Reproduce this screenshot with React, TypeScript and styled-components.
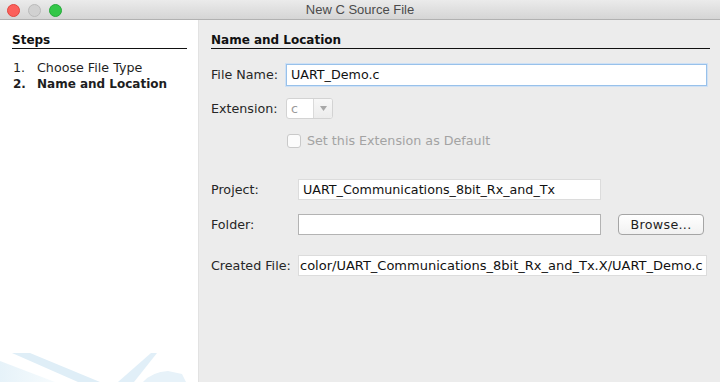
import React from 'react'
import styled, { createGlobalStyle } from 'styled-components'

const GlobalStyle = createGlobalStyle`
  html, body {
    margin: 0;
    padding: 0;
    background: #ececec;
  }
  #root {
    width: 720px;
    height: 382px;
    overflow: hidden;
  }
`

const uiFont = `"DejaVu Sans", "Noto Sans", sans-serif`

const Window = styled.div`
  width: 720px;
  height: 382px;
  display: flex;
  flex-direction: column;
  font-family: ${uiFont};
  font-size: 12.7px;
  color: #222;
`

const TitleBar = styled.div`
  height: 19px;
  flex: none;
  display: flex;
  align-items: center;
  position: relative;
  background: linear-gradient(#ebebeb, #d5d5d5);
  border-bottom: 1px solid #b1b1b1;
`

const Lights = styled.div`
  display: flex;
  gap: 8px;
  padding-left: 7px;
  padding-top: 2px;
`

const Light = styled.span<{ $fill: string; $edge: string }>`
  display: block;
  width: 11px;
  height: 11px;
  border-radius: 50%;
  background: ${p => p.$fill};
  border: 1px solid ${p => p.$edge};
  box-sizing: content-box;
`

const Title = styled.div`
  position: absolute;
  left: 0;
  right: 0;
  top: 0;
  line-height: 20px;
  text-align: center;
  font-family: "Liberation Sans", Arial, sans-serif;
  font-size: 13px;
  color: #4b4b4b;
`

const Body = styled.div`
  flex: 1;
  display: flex;
  min-height: 0;
`

const Sidebar = styled.div`
  width: 175px;
  flex: none;
  background: #fff;
  padding: 13px 11px 0 12px;
  display: flex;
  flex-direction: column;
  border-right: 1px solid #e2e2e2;
  position: relative;
`

const SectionTitle = styled.div`
  font-weight: bold;
  font-size: 12px;
  line-height: 15px;
  padding-bottom: 0;
  border-bottom: 1px solid #111;
  color: #111;
`

const StepList = styled.ol`
  list-style: none;
  margin: 11px 0 0 1px;
  padding: 0;
`

const Step = styled.li<{ $current?: boolean }>`
  display: flex;
  line-height: 16px;
  font-weight: ${p => (p.$current ? 'bold' : 'normal')};
  font-size: ${p => (p.$current ? '12px' : '12.7px')};
  color: #1e1e1e;
`

const StepNum = styled.span`
  width: 24px;
  flex: none;
`

const Watermark = styled.svg`
  position: absolute;
  left: 0;
  bottom: 0;
`

const Content = styled.div`
  flex: 1;
  background: #ececec;
  padding: 13px 10px 0 12px;
  display: flex;
  flex-direction: column;
`

const FormTop = styled.div`
  display: grid;
  grid-template-columns: 75px 1fr;
  align-items: center;
  row-gap: 12px;
  margin-top: 15px;
  padding-right: 3px;
`

const FormBottom = styled.div<{ $gap: number }>`
  display: grid;
  grid-template-columns: 87px 303px 1fr;
  align-items: center;
  margin-top: ${p => p.$gap}px;
  padding-right: 3px;
  row-gap: 14px;
`

const Label = styled.div`
  color: #262626;
  line-height: 16px;
  white-space: nowrap;
`

const TextField = styled.div<{ $tone: 'focus' | 'plain' | 'readonly'; $span?: boolean }>`
  height: ${p => (p.$tone === 'focus' ? 20 : 19)}px;
  box-sizing: content-box;
  background: #fff;
  border: 1px solid
    ${p => (p.$tone === 'focus' ? '#98c1ea' : p.$tone === 'plain' ? '#b3b3b3' : '#dcdcdc')};
  box-shadow: ${p => (p.$tone === 'focus' ? '0 0 0 1px #cfe1f5' : 'none')};
  padding: 0 4px;
  line-height: ${p => (p.$tone === 'focus' ? 20 : 19)}px;
  color: #111;
  white-space: nowrap;
  overflow: hidden;
  ${p => (p.$span ? 'grid-column: 2 / 4;' : '')}
`

const CreatedText = styled.span`
  display: inline-block;
  margin-left: -3px;
  font-size: 13px;
`

const Combo = styled.div`
  display: flex;
  width: 45px;
  height: 19px;
  border: 1px solid #d3d3d3;
  border-radius: 3px;
  background: #fff;
  overflow: hidden;
`

const ComboValue = styled.div`
  flex: 1;
  padding-left: 4px;
  line-height: 19px;
  color: #9a9a9a;
`

const ComboArrow = styled.div`
  width: 18px;
  border-left: 1px solid #dadada;
  background: linear-gradient(#f7f7f7, #ececec);
  display: flex;
  align-items: center;
  justify-content: center;
`

const CheckRow = styled.label`
  grid-column: 2;
  display: flex;
  align-items: center;
  gap: 6px;
  margin-left: 1px;
  color: #a3a3a3;
  line-height: 16px;
  margin-top: 2px;
`

const CheckBox = styled.span`
  width: 12px;
  height: 12px;
  border: 1px solid #c9c9c9;
  border-radius: 3px;
  background: #fbfbfb;
  flex: none;
`

const Button = styled.button`
  justify-self: start;
  margin-left: 17px;
  width: 86px;
  height: 21px;
  border: 1px solid #a5a5a5;
  border-radius: 4px;
  background: linear-gradient(#ffffff, #f1f1f1);
  font-family: ${uiFont};
  font-size: 12.7px;
  color: #1e1e1e;
  padding: 0;
  line-height: 19px;
  letter-spacing: 0.3px;
`

export default function App() {
  return (
    <>
      <GlobalStyle />
      <Window>
        <TitleBar>
          <Lights>
            <Light $fill="#fc605b" $edge="#e0473f" />
            <Light $fill="#d1d1d1" $edge="#bababa" />
            <Light $fill="#33c748" $edge="#25a93a" />
          </Lights>
          <Title>New C Source File</Title>
        </TitleBar>
        <Body>
          <Sidebar>
            <SectionTitle>Steps</SectionTitle>
            <StepList>
              <Step>
                <StepNum>1.</StepNum>Choose File Type
              </Step>
              <Step $current>
                <StepNum>2.</StepNum>Name and Location
              </Step>
            </StepList>
            <Watermark width="198" height="30" viewBox="0 0 198 30">
              <defs>
                <linearGradient id="wmLeft" x1="0" y1="0" x2="1" y2="0">
                  <stop offset="0" stopColor="#e6f2f9" />
                  <stop offset="1" stopColor="#f6fbfd" />
                </linearGradient>
              </defs>
              <polygon points="12,1 30,1 100,30 78,30" fill="#dfeef7" />
              <polygon points="0,9 0,30 55,30" fill="url(#wmLeft)" />
              <polygon points="118,30 134,30 157,1 151,1" fill="#e1eff8" />
              <path d="M143 30 Q152 20 168 19 L182 22 L186 30 Z" fill="#e7f2f9" />
            </Watermark>
          </Sidebar>
          <Content>
            <SectionTitle>Name and Location</SectionTitle>
            <FormTop>
              <Label>File Name:</Label>
              <TextField $tone="focus">UART_Demo.c</TextField>
              <Label>Extension:</Label>
              <Combo>
                <ComboValue>c</ComboValue>
                <ComboArrow>
                  <svg width="7" height="5" viewBox="0 0 7 5">
                    <polygon points="0,0 7,0 3.5,5" fill="#a8a8a8" />
                  </svg>
                </ComboArrow>
              </Combo>
              <CheckRow>
                <CheckBox />
                Set this Extension as Default
              </CheckRow>
            </FormTop>
            <FormBottom $gap={30}>
              <Label>Project:</Label>
              <TextField $tone="readonly">UART_Communications_8bit_Rx_and_Tx</TextField>
              <span />
              <Label>Folder:</Label>
              <TextField $tone="plain" />
              <Button>Browse...</Button>
            </FormBottom>
            <FormBottom $gap={20}>
              <Label>Created File:</Label>
              <TextField $tone="readonly" $span>
                <CreatedText>color/UART_Communications_8bit_Rx_and_Tx.X/UART_Demo.c</CreatedText>
              </TextField>
            </FormBottom>
          </Content>
        </Body>
      </Window>
    </>
  )
}
